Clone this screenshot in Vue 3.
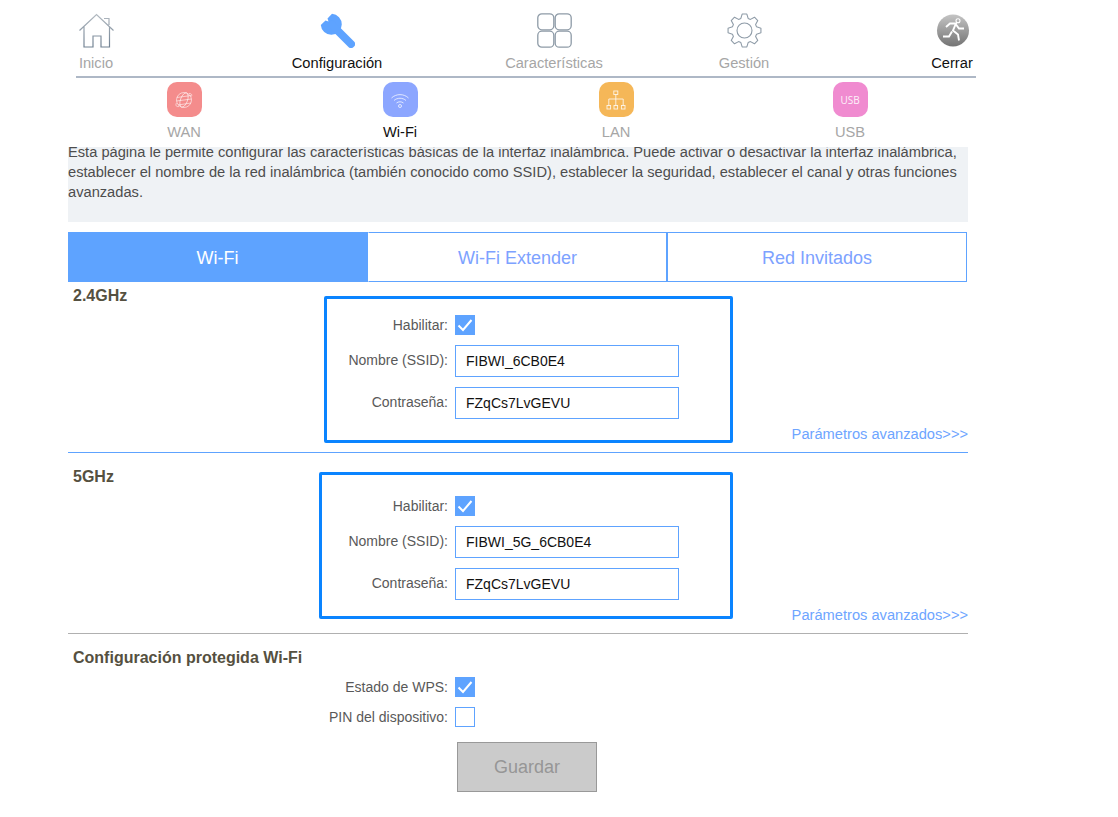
<script setup>
const navItems = [
  { key: 'home', label: 'Inicio' },
  { key: 'wrench', label: 'Configuración', active: true },
  { key: 'grid', label: 'Características' },
  { key: 'gear', label: 'Gestión' },
  { key: 'exit', label: 'Cerrar', active: true }
]
const subItems = [
  { key: 'wan', label: 'WAN' },
  { key: 'wifi', label: 'Wi-Fi', active: true },
  { key: 'lan', label: 'LAN' },
  { key: 'usb', label: 'USB' }
]
const tabs = ['Wi-Fi', 'Wi-Fi Extender', 'Red Invitados']
const bands = [
  { name: '2.4GHz', ssid: 'FIBWI_6CB0E4', pass: 'FZqCs7LvGEVU', cls: 'band-24' },
  { name: '5GHz', ssid: 'FIBWI_5G_6CB0E4', pass: 'FZqCs7LvGEVU', cls: 'band-5' }
]
function gearPath() {
  const teeth = 8
  const cx = 17.5
  const cy = 17.5
  const pts = []
  for (let i = 0; i < teeth; i++) {
    const a = (i / teeth) * Math.PI * 2 - Math.PI / 2
    const step = (Math.PI * 2) / teeth
    const seq = [
      [12.6, -0.5],
      [16.6, -0.24],
      [16.6, 0.24],
      [12.6, 0.5]
    ]
    for (const [r, k] of seq) {
      const t = a + k * step * 0.75
      pts.push((cx + r * Math.cos(t)).toFixed(2) + ' ' + (cy + r * Math.sin(t)).toFixed(2))
    }
  }
  return 'M' + pts.join('L') + 'Z'
}
const gear = gearPath()
</script>

<template>
  <div class="page">
    <nav class="topnav">
      <div v-for="item in navItems" :key="item.key" class="nav-item" :class="{ on: item.active }">
        <svg v-if="item.key === 'home'" class="nav-icon" viewBox="0 0 35 35" fill="none">
          <defs>
            <linearGradient id="homeG" gradientUnits="userSpaceOnUse" x1="0" y1="0" x2="0" y2="35">
              <stop offset="0" stop-color="#b5bcc3" />
              <stop offset="1" stop-color="#6f8091" />
            </linearGradient>
          </defs>
          <path d="M.5 17.5 17.5 1.5 34.5 17.5M25 5.500h5v6.500M5 13.500v20.500h9V23h8v11h8.500V13.500" stroke="url(#homeG)" stroke-width="1.200" />
        </svg>
        <svg v-else-if="item.key === 'wrench'" class="nav-icon" viewBox="0 0 35 35">
          <path d="M12 .8 7.500 5.500 8.500 8.500 5.500 7.500.8 12A10.500 10.500 0 1 0 12 .8Z" fill="#5ea3ff" />
          <path d="M12 12 31 31" stroke="#5ea3ff" stroke-width="8" stroke-linecap="round" />
        </svg>
        <svg v-else-if="item.key === 'grid'" class="nav-icon" viewBox="0 0 35 35" fill="none" stroke="#8e9ba7" stroke-width="1.300">
          <rect x=".8" y=".8" width="16" height="16" rx="4" />
          <rect x="18.200" y=".8" width="16" height="16" rx="4" />
          <rect x=".8" y="18.200" width="16" height="16" rx="4" />
          <rect x="18.200" y="18.200" width="16" height="16" rx="4" />
        </svg>
        <svg v-else-if="item.key === 'gear'" class="nav-icon" viewBox="0 0 35 35" fill="none" stroke="#8e9ba7" stroke-width="1.100">
          <path :d="gear" stroke-linejoin="round" />
          <circle cx="17.500" cy="17.500" r="7.500" />
        </svg>
        <svg v-else class="nav-icon" viewBox="0 0 35 35">
          <defs>
            <linearGradient id="exitG" x1="0" y1="0" x2="0" y2="1">
              <stop offset="0" stop-color="#c4c4c4" />
              <stop offset="1" stop-color="#747474" />
            </linearGradient>
          </defs>
          <circle cx="18" cy="17.500" r="16" fill="url(#exitG)" />
          <circle cx="23" cy="7.700" r="2" fill="none" stroke="#fff" stroke-width="1.100" />
          <path d="M11 14 15 10.500h6l-3 7 5 4 1 6M17 18.500l-3 5H8M21 11.500l3 4h5" fill="none" stroke="#fff" stroke-width="1.900" />
        </svg>
        <span class="nav-label">{{ item.label }}</span>
      </div>
    </nav>

    <div class="subnav">
      <div v-for="item in subItems" :key="item.key" class="sub-item" :class="{ on: item.active }">
        <div class="sub-icon" :class="'i-' + item.key">
          <svg v-if="item.key === 'wan'" viewBox="0 0 20 20" width="20" height="20" fill="none" stroke="#fff" stroke-width=".7" stroke-opacity=".8">
            <circle cx="10" cy="10" r="7.500" />
            <ellipse cx="10" cy="10" rx="3.500" ry="7.500" transform="rotate(20 10 10)" />
            <path d="M3 7.500 17 5.500M2.500 11 17.500 9M4 15 17 13" />
            <path d="M15 3.500c3 0 3 1.500 2.500 3M2.500 13c-1.500 2.500 0 4 2.500 3.500" />
          </svg>
          <svg v-else-if="item.key === 'wifi'" viewBox="0 0 20 20" width="20" height="20" fill="none" stroke="#fff" stroke-width=".9" stroke-opacity=".8">
            <path d="M1.500 8c4.500-4.500 12.500-4.500 17 0M4 10.500c3.200-3 8.800-3 12 0M6.500 13c1.800-1.600 5.200-1.600 7 0" />
            <circle cx="10" cy="16" r="1.500" />
          </svg>
          <svg v-else-if="item.key === 'lan'" viewBox="0 0 20 20" width="20" height="20" fill="none" stroke="#fff" stroke-width=".9" stroke-opacity=".85">
            <rect x="7.800" y="1" width="4" height="3.500" />
            <path d="M9.800 4.500V15.500M2.800 15.500V9h14.400v6.500" />
            <rect x="1" y="15.500" width="3.600" height="3.500" />
            <rect x="8" y="15.500" width="3.600" height="3.500" />
            <rect x="15.400" y="15.500" width="3.600" height="3.500" />
          </svg>
          <span v-else class="usb-text">USB</span>
        </div>
        <span class="sub-label">{{ item.label }}</span>
      </div>
    </div>

    <main class="content">
      <div class="intro">
        <p>Esta página le permite configurar las características básicas de la interfaz inalámbrica. Puede activar o desactivar la interfaz inalámbrica, establecer el nombre de la red inalámbrica (también conocido como SSID), establecer la seguridad, establecer el canal y otras funciones avanzadas.</p>
      </div>

      <div class="tabs">
        <div v-for="(t, i) in tabs" :key="t" class="tab" :class="{ active: i === 0 }">{{ t }}</div>
      </div>

      <section v-for="b in bands" :key="b.name" class="band" :class="b.cls">
        <h3 class="band-name">{{ b.name }}</h3>
        <div class="box">
          <div class="row row-check">
            <label>Habilitar:</label>
            <span class="check on">
              <svg viewBox="0 0 20 20" width="20" height="20" fill="none" stroke="#fff" stroke-width="2"><path d="M3.500 10.500 8 15 16.500 5" /></svg>
            </span>
          </div>
          <div class="row row-input">
            <label>Nombre (SSID):</label>
            <input class="text" type="text" :value="b.ssid" />
          </div>
          <div class="row row-input">
            <label>Contraseña:</label>
            <input class="text" type="text" :value="b.pass" />
          </div>
        </div>
        <a class="adv">Parámetros avanzados&gt;&gt;&gt;</a>
      </section>

      <section class="wps">
        <h3 class="wps-title">Configuración protegida Wi-Fi</h3>
        <div class="row wps-row first">
          <label>Estado de WPS:</label>
          <span class="check on">
            <svg viewBox="0 0 20 20" width="20" height="20" fill="none" stroke="#fff" stroke-width="2"><path d="M3.500 10.500 8 15 16.500 5" /></svg>
          </span>
        </div>
        <div class="row wps-row">
          <label>PIN del dispositivo:</label>
          <span class="check"></span>
        </div>
        <button class="save" type="button">Guardar</button>
      </section>
    </main>
  </div>
</template>

<style>
html, body { margin: 0; background: #fff; }
</style>

<style scoped>
.page {
  width: 1118px;
  height: 817px;
  overflow: hidden;
  font-family: "Liberation Sans", Arial, sans-serif;
  font-size: 14.67px;
  color: #555;
  position: relative;
}
.topnav {
  width: 900px;
  height: 78px;
  margin-left: 76px;
  box-sizing: border-box;
  border-bottom: 2px solid #aeb8c6;
  display: flex;
  padding-top: 13px;
}
.nav-item {
  display: flex;
  flex-direction: column;
  align-items: center;
  flex: none;
  color: #a6a6a6;
}
.nav-item.on { color: #111; }
.nav-icon { width: 35px; height: 35px; display: block; }
.nav-label { line-height: 16px; margin-top: 7px; white-space: nowrap; }
.nav-item:nth-child(1) { width: 40px; }
.nav-item:nth-child(2) { width: 100px; margin-left: 171px; }
.nav-item:nth-child(3) { width: 120px; margin-left: 107px; }
.nav-item:nth-child(4) { width: 60px; margin-left: 100px; }
.nav-item:nth-child(5) { width: 44px; margin-left: 156px; }

.subnav {
  height: 69px;
  width: 900px;
  margin-left: 76px;
  display: flex;
  padding-top: 4px;
  box-sizing: border-box;
}
.sub-item {
  flex: none;
  width: 60px;
  display: flex;
  flex-direction: column;
  align-items: center;
  color: #a6a6a6;
}
.sub-item.on { color: #111; }
.sub-item:nth-child(1) { margin-left: 78px; }
.sub-item:nth-child(2) { margin-left: 156px; }
.sub-item:nth-child(3) { margin-left: 156px; }
.sub-item:nth-child(4) { margin-left: 174px; }
.sub-icon {
  width: 35px;
  height: 35px;
  border-radius: 10px;
  display: flex;
  align-items: center;
  justify-content: center;
}
.i-wan { background: #f48c8c; }
.i-wifi { background: #8ca6ff; }
.i-lan { background: #f5b758; }
.i-usb { background: #f08bd0; }
.usb-text { color: #fff; font-family: "Open Sans", sans-serif; font-size: 10px; opacity: .9; }
.sub-label { line-height: 16px; margin-top: 7px; }

.content { width: 900px; margin-left: 68px; }
.intro {
  height: 75px;
  background: #eff2f5;
  overflow: hidden;
}
.intro p {
  margin: -5px 0 0;
  line-height: 20px;
  color: #4d4d4d;
}
.tabs { display: flex; width: 899px; height: 50px; margin-top: 10px; }
.tab {
  flex: none;
  width: 300px;
  box-sizing: border-box;
  border: 1px solid #5ea3ff;
  border-left-width: 0;
  display: flex;
  align-items: center;
  justify-content: center;
  font-size: 18px;
  color: #7da2ff;
  padding-top: 2px;
}
.tab:nth-child(2) { width: 299px; border-left: 1px solid transparent; }
.tab:nth-child(3) { border-left: 1px solid #5ea3ff; }
.tab.active { background: #5ea3ff; color: #fff; }

.band {
  display: flex;
  align-items: flex-start;
  box-sizing: border-box;
  border-bottom: 1px solid #5ea3ff;
}
.band-24 { height: 171px; }
.band-5 { height: 181px; padding-top: 19px; border-bottom-color: #b0b0b0; }
.band-name {
  margin: 0;
  padding-left: 5px;
  font-size: 16px;
  line-height: 16px;
  color: #555040;
  flex: none;
  box-sizing: border-box;
}
.band-24 .band-name { width: 256px; margin-top: 6px; }
.band-5 .band-name { width: 251px; margin-top: -3px; margin-bottom: 3px; }
.box {
  flex: none;
  box-sizing: border-box;
  height: 147px;
  border: 3px solid #0a84ff;
  border-radius: 2px;
  margin-top: 14px;
  padding-top: 16px;
}
.band-24 .box { width: 409px; }
.band-5 .box { width: 414px; margin-top: 0; padding-top: 21px; }
.row { display: flex; align-items: center; font-size: 14px; }
.row label {
  text-align: right;
  flex: none;
  margin-right: 7px;
  color: #595959;
  white-space: nowrap;
}
.band-24 .row label { width: 121px; }
.band-5 .row label { width: 126px; }
.row-check { height: 20px; margin-bottom: 10px; }
.row-input { height: 32px; margin-bottom: 10px; }
.row-input label { margin-bottom: 2px; }
.check {
  width: 20px;
  height: 20px;
  box-sizing: border-box;
  border: 1px solid #5ea3ff;
  background: #fff;
  flex: none;
  position: relative;
  display: block;
}
.check.on { background: #5ea3ff; }
.check svg { position: absolute; left: -1px; top: -1px; }
.text {
  width: 224px;
  height: 32px;
  box-sizing: border-box;
  border: 1px solid #5ea3ff;
  padding: 0 10px;
  font: 14px "Liberation Sans", Arial, sans-serif;
  color: #111;
  outline: none;
  background: #fff;
  border-radius: 0;
}
.adv {
  flex: 1 1 0;
  align-self: flex-end;
  text-align: right;
  color: #6ea5ff;
  white-space: nowrap;
  line-height: 16px;
  margin-bottom: 10px;
}
.wps-title {
  margin: 0;
  padding: 16px 0 0 5px;
  font-size: 16px;
  line-height: 16px;
  color: #555040;
}
.wps-row { height: 20px; margin-bottom: 10px; }
.wps-row.first { margin-top: 11px; }
.wps-row label { width: 380px; margin-right: 7px; }
.save {
  display: block;
  margin: 15px 0 0 389px;
  width: 140px;
  height: 50px;
  box-sizing: border-box;
  background: #cbcbcb;
  border: 1px solid #999;
  color: #969696;
  font: 18px "Liberation Sans", Arial, sans-serif;
  padding: 0;
}
</style>
